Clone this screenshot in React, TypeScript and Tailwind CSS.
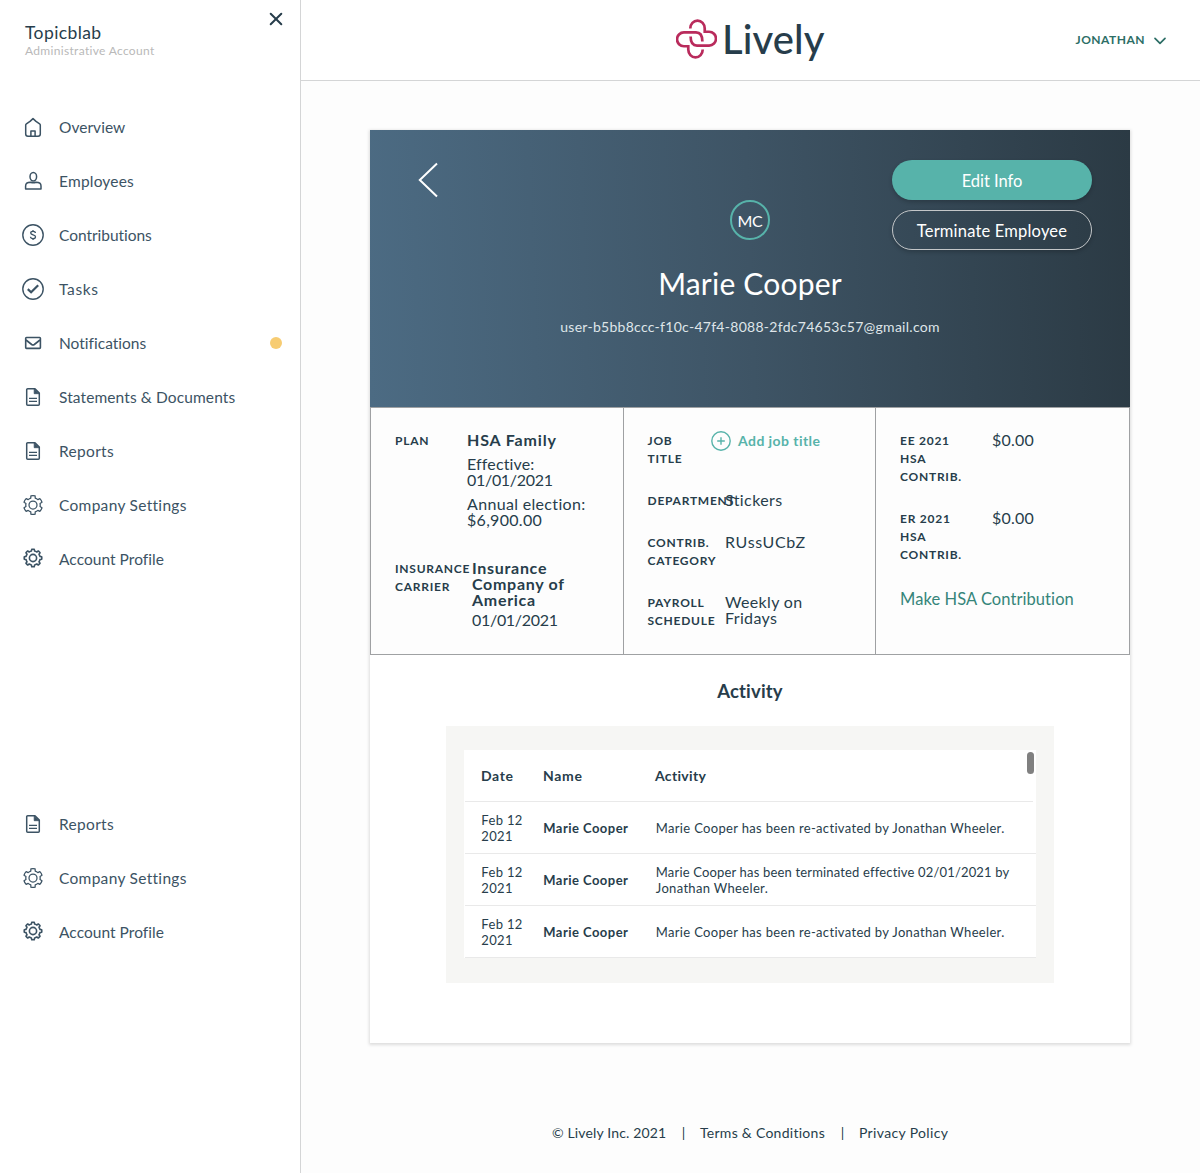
import React, { type ReactNode } from "react";

function HomeIcon() {
  return (
    <svg width="20" height="22" viewBox="0 0 20 22" fill="none" stroke="currentColor" strokeWidth="1.5" strokeLinejoin="round">
      <path d="M10 2.600 7 5.400 3.400 7.900a1.500 1.500 0 0 0-.7 1.300v8.800a2.200 2.200 0 0 0 2.200 2.200h10.200a2.200 2.200 0 0 0 2.200-2.200V9.200a1.500 1.500 0 0 0-.7-1.300L13 5.400Z" />
      <path d="M7.900 20v-5h4.200v5" />
    </svg>
  );
}

function PersonIcon() {
  return (
    <svg width="20" height="22" viewBox="0 0 20 22" fill="none" stroke="currentColor" strokeWidth="1.5" strokeLinejoin="round">
      <ellipse cx="10.3" cy="6.700" rx="3.300" ry="4.200" />
      <path d="M2.600 18.900v-3c0-2.500 2.200-3.600 5-3.600 1.700.7 3.700.7 5.400 0 2.800 0 5 1.100 5 3.600v3Z" />
    </svg>
  );
}

function DollarIcon() {
  return (
    <svg width="24" height="24" viewBox="0 0 24 24" fill="none" stroke="currentColor" strokeWidth="1.4">
      <circle cx="12" cy="12" r="10.200" />
      <path d="M14.400 10c-.1-1.100-1-1.700-2.400-1.700s-2.300.6-2.300 1.700c0 2.300 4.800 1.300 4.800 3.700 0 1.200-1 1.900-2.500 1.900s-2.400-.7-2.500-1.900M12 7v1.300M12 15.600V17" strokeWidth="1.300" />
    </svg>
  );
}

function CheckIcon() {
  return (
    <svg width="24" height="24" viewBox="0 0 24 24" fill="none" stroke="currentColor" strokeWidth="1.400">
      <circle cx="12" cy="12" r="10.200" />
      <path d="m6.800 12.100 3.300 3.100 7.100-7" strokeWidth="2.200" />
    </svg>
  );
}

function MailIcon() {
  return (
    <svg width="20" height="22" viewBox="0 0 20 22" fill="none" stroke="currentColor" strokeWidth="1.600" strokeLinejoin="round">
      <rect x="2.700" y="5.500" width="14.700" height="10.900" rx="0.8" />
      <path d="m3 8 5.700 4.500c.8.600 1.800.600 2.600 0L17 8" />
    </svg>
  );
}

function DocIcon() {
  return (
    <svg width="20" height="22" viewBox="0 0 20 22" fill="none" stroke="currentColor" strokeWidth="1.500" strokeLinejoin="round">
      <path d="M12 2.700H4.700a1 1 0 0 0-1 1v14.600a1 1 0 0 0 1 1h10.600a1 1 0 0 0 1-1V7Z" />
      <path d="M11.200 2.700v5h5Z" fill="currentColor" strokeWidth="0.800" />
      <path d="M6 12.300h8M6 15.300h8" strokeWidth="1.200" />
    </svg>
  );
}

// Closed outline of a gear centred on (12, 12); angles are in degrees.
function gearPath(teeth: number, outer: number, inner: number, tip: number, root: number) {
  const step = 360 / teeth;
  const at = (deg: number, r: number) => {
    const a = ((deg - 90) * Math.PI) / 180;
    return `${(12 + r * Math.cos(a)).toFixed(2)} ${(12 + r * Math.sin(a)).toFixed(2)}`;
  };
  let d = "";
  for (let i = 0; i < teeth; i++) {
    const c = i * step;
    d += `${i ? "L" : "M"}${at(c - root, inner)}L${at(c - tip, outer)}A${outer} ${outer} 0 0 1 ${at(c + tip, outer)}L${at(c + root, inner)}A${inner} ${inner} 0 0 1 ${at(c + step - root, inner)}`;
  }
  return d + "Z";
}

function Cog() {
  return (
    <svg width="24" height="24" viewBox="0 0 24 24" fill="none" stroke="currentColor" strokeWidth="1.250" strokeLinejoin="round">
      <path d={gearPath(6, 9.4, 7.2, 13, 18)} />
      <circle cx="12" cy="12" r="4" />
    </svg>
  );
}

function CogBold() {
  return (
    <svg width="24" height="24" viewBox="0 0 24 24" className="-mt-[3px]" fill="none" stroke="currentColor" strokeWidth="1.600" strokeLinejoin="round">
      <path d={gearPath(8, 8.8, 7.1, 8, 13)} />
      <circle cx="12" cy="12" r="3.600" />
    </svg>
  );
}

type NavEntry = { label: string; icon: ReactNode; tracking: string; dot?: boolean };

const mainNav: NavEntry[] = [
  { label: "Overview", icon: <HomeIcon />, tracking: "tracking-[0.03px]" },
  { label: "Employees", icon: <PersonIcon />, tracking: "tracking-[0.2px]" },
  { label: "Contributions", icon: <DollarIcon />, tracking: "tracking-[-0.03px]" },
  { label: "Tasks", icon: <CheckIcon />, tracking: "tracking-[0.65px]" },
  { label: "Notifications", icon: <MailIcon />, tracking: "tracking-[0.01px]", dot: true },
  { label: "Statements & Documents", icon: <DocIcon />, tracking: "tracking-[0.11px]" },
];

const secondaryNav: NavEntry[] = [
  { label: "Reports", icon: <DocIcon />, tracking: "tracking-[0.32px]" },
  { label: "Company Settings", icon: <Cog />, tracking: "tracking-[0.3px]" },
  { label: "Account Profile", icon: <CogBold />, tracking: "tracking-[0.04px]" },
];

function NavItem({ label, icon, tracking, dot }: NavEntry) {
  return (
    <a className="flex h-[54px] items-center text-[15.5px] text-[#3c5364]">
      <span className="flex w-[66px] shrink-0 items-center justify-center">{icon}</span>
      <span className={`-ml-[7px] whitespace-nowrap pt-[2px] ${tracking}`}>{label}</span>
      {dot && <span className="ml-auto mr-[18px] h-3 w-3 rounded-full bg-[#f7cc72]" />}
    </a>
  );
}

function Sidebar() {
  return (
    <aside className="flex w-[301px] shrink-0 flex-col border-r border-[#d4d5d6] bg-white">
      <div className="flex h-[100px] justify-between pl-[25px] pr-[17px]">
        <div className="pt-[22px]">
          <div className="text-[17.500px] leading-[22px] tracking-[0.4px]">Topicblab</div>
          <div className="text-[12px] leading-[14px] tracking-[0.32px] text-[#b9b9b9]">Administrative Account</div>
        </div>
        <svg width="14" height="14" viewBox="0 0 14 14" className="mt-[12px]" fill="none" stroke="currentColor" strokeWidth="2" strokeLinecap="round">
          <path d="m1.700 1.700 10.600 10.600M12.300 1.700 1.700 12.300" />
        </svg>
      </div>
      <nav>
        {[...mainNav, ...secondaryNav].map((n) => (
          <NavItem key={n.label} {...n} />
        ))}
      </nav>
      <nav className="mt-[211px]">
        {secondaryNav.map((n) => (
          <NavItem key={n.label} {...n} />
        ))}
      </nav>
    </aside>
  );
}

function Logo() {
  return (
    <div className="flex items-start">
      <svg width="41" height="40" viewBox="47.500 56 122 119" className="mt-[18.500px]" fill="none" stroke="#b92b5c" strokeWidth="8">
        <path d="M90 84A21.500 23 0 0 1 133 84V94H146A20.500 20.500 0 0 1 146 135H110C97 135 91 126 91 108" />
        <path d="M127 147A21.500 23 0 0 1 84 147V137H71A20.500 20.500 0 0 1 71 96H107C120 96 126 105 126 123" />
      </svg>
      <span className="ml-[5px] mt-[15px] text-[40px] font-medium leading-[48px] tracking-[0.1px]">Lively</span>
    </div>
  );
}

function Header() {
  return (
    <header className="flex h-[81px] shrink-0 border-b border-[#d4d5d6] bg-white">
      <div className="w-[375px]" />
      <Logo />
      <div className="ml-auto mr-[34px] flex items-center gap-[9px] text-[12px] font-bold text-[#2d6e66]">
        <span className="tracking-[0.480px]">JONATHAN</span>
        <svg width="12" height="8" viewBox="0 0 12 8" className="mt-[2px]" fill="none" stroke="currentColor" strokeWidth="1.700" strokeLinecap="round" strokeLinejoin="round">
          <path d="m1 1.300 5 5 5-5" />
        </svg>
      </div>
    </header>
  );
}

function ProfileBanner() {
  return (
    <div className="relative flex h-[277px] flex-col items-center bg-[linear-gradient(88deg,#4c6b83,#3e5465_50%,#2b3a44)] pt-[70px] text-white">
      <svg width="20" height="36" viewBox="0 0 20 36" className="absolute left-[48px] top-[32px]" fill="none" stroke="white" strokeWidth="2">
        <path d="M19 1.500 1.800 18 19 34.500" />
      </svg>
      <div className="absolute right-[38px] top-[30px] flex w-[200px] flex-col gap-[10px] text-[16.500px]">
        <button className="h-10 rounded-full bg-[#57b3aa] pt-[2px] tracking-[-0.050px] shadow-[0_2px_4px_rgba(0,0,0,0.2)]">Edit Info</button>
        <button className="h-10 rounded-full border border-[#c3c6c8] pt-[2px] tracking-[0.190px] shadow-[0_2px_4px_rgba(0,0,0,0.2)]">Terminate Employee</button>
      </div>
      <div className="flex h-10 w-10 items-center justify-center rounded-full border-2 border-[#57b3aa] pt-[2px] text-[16px] tracking-[-0.3px]">MC</div>
      <h1 className="mt-[23px] text-[30px] leading-[40px] tracking-[0.2px]">Marie Cooper</h1>
      <p className="mt-[14px] text-[14px] leading-[20px] tracking-[0.280px] text-[#dfe5e9]">
        user-b5bb8ccc-f10c-47f4-8088-2fdc74653c57@gmail.com
      </p>
    </div>
  );
}

function Field({ label, labelWidth, children }: { label: ReactNode; labelWidth: string; children: ReactNode }) {
  return (
    <div className="flex">
      <div className={`shrink-0 whitespace-nowrap text-[12px] font-bold leading-[18px] tracking-[0.750px] ${labelWidth}`}>{label}</div>
      <div className="whitespace-nowrap text-[16px] leading-[16px]">{children}</div>
    </div>
  );
}

function InfoGrid() {
  return (
    <div className="grid h-[248px] grid-cols-[253px_252px_255px] border border-[#9fa1a3] bg-[#fdfdfd]">
      <div className="border-r border-[#9fa1a3] p-6">
        <Field label="PLAN" labelWidth="w-[72px]">
          <div className="font-bold tracking-[0.850px]">HSA Family</div>
          <div className="mt-2"><span className="tracking-[0.15px]">Effective:</span><br /><span className="tracking-[-0.3px]">01/01/2021</span></div>
          <div className="mt-2"><span className="tracking-[0.330px]">Annual election:</span><br /><span className="tracking-[0.300px]">$6,900.00</span></div>
        </Field>
        <div className="h-8" />
        <Field label={<>INSURANCE<br />CARRIER</>} labelWidth="w-[77px]">
          <div className="font-bold tracking-[0.700px]">Insurance<br />Company of<br />America</div>
          <div className="mt-1 tracking-[-0.3px]">01/01/2021</div>
        </Field>
      </div>
      <div className="flex flex-col gap-6 border-r border-[#9fa1a3] py-6 pl-[23.500px] pr-6">
        <Field label={<>JOB<br />TITLE</>} labelWidth="w-[63.500px]">
          <div className="-mt-[1px] flex items-center text-[#57b3aa]">
            <svg width="20" height="20" viewBox="0 0 20 20" fill="none" stroke="currentColor" strokeWidth="1.400">
              <circle cx="10" cy="10" r="9.200" />
              <path d="M10 6.200v7.600M6.200 10h7.600" />
            </svg>
            <span className="ml-[7px] text-[14px] font-bold tracking-[0.430px]">Add job title</span>
          </div>
        </Field>
        <Field label="DEPARTMENT" labelWidth="w-[77.500px]"><span className="tracking-[0.400px]">Stickers</span></Field>
        <Field label={<>CONTRIB.<br />CATEGORY</>} labelWidth="w-[77.500px]"><span className="tracking-[0.65px]">RUssUCbZ</span></Field>
        <Field label={<>PAYROLL<br />SCHEDULE</>} labelWidth="w-[77.500px]"><span className="tracking-[0.350px]">Weekly on<br />Fridays</span></Field>
      </div>
      <div className="flex flex-col gap-6 p-6">
        <Field label={<>EE 2021<br />HSA<br />CONTRIB.</>} labelWidth="w-[92px]"><span className="tracking-[0.250px]">$0.00</span></Field>
        <Field label={<>ER 2021<br />HSA<br />CONTRIB.</>} labelWidth="w-[92px]"><span className="tracking-[0.250px]">$0.00</span></Field>
        <a className="pt-px text-[16.500px] leading-[20px] tracking-[0.070px] text-[#36857a]">Make HSA Contribution</a>
      </div>
    </div>
  );
}

const activity = [
  { tracking: "tracking-[0.330px]", text: <>Marie Cooper has been re-activated by Jonathan Wheeler.</> },
  { tracking: "tracking-[0.170px]", text: <>Marie Cooper has been terminated effective 02/01/2021 by<br /><span className="tracking-[0.33px]">Jonathan Wheeler.</span></> },
  { tracking: "tracking-[0.330px]", text: <>Marie Cooper has been re-activated by Jonathan Wheeler.</> },
];

function ActivityPanel() {
  return (
    <section>
      <h2 className="mt-[23px] text-center text-[18.500px] font-bold leading-[26px] tracking-[0.170px]">Activity</h2>
      <div className="mx-auto mt-[22px] h-[257px] w-[608px] bg-[#f6f6f4] px-[18px] pt-6">
        <div className="relative h-[208px] bg-white pl-px">
          <div className="mr-[3px] grid h-[52px] grid-cols-[62px_112px_1fr] items-center border-b border-[#e9e9e9] pl-4 text-[14px] font-bold tracking-[0.650px]">
            <span>Date</span>
            <span>Name</span>
            <span className="tracking-[0.330px]">Activity</span>
          </div>
          {activity.map((a, i) => (
            <div key={i} className="grid h-[52px] grid-cols-[62px_112.500px_1fr] items-center border-b border-[#e9e9e9] pl-[16.300px] text-[13px] leading-[16px]">
              <span className="tracking-[0.350px]">Feb 12<br />2021</span>
              <span className="font-bold tracking-[0.460px]">Marie Cooper</span>
              <span className={`whitespace-nowrap ${a.tracking}`}>{a.text}</span>
            </div>
          ))}
          <div className="absolute right-[2px] top-[2px] h-[22px] w-[7px] rounded-full bg-[#808080]" />
        </div>
      </div>
    </section>
  );
}

function Footer() {
  return (
    <footer className="mt-[80px] flex items-center pl-[251px] text-[14px] leading-[20px]">
      <span className="w-[115px] whitespace-nowrap tracking-[0.150px]">© Lively Inc. 2021</span>
      <span className="w-[33px] text-center">|</span>
      <a className="w-[126px] whitespace-nowrap tracking-[0.270px]">Terms &amp; Conditions</a>
      <span className="w-[33px] text-center">|</span>
      <a className="tracking-[0.350px]">Privacy Policy</a>
    </footer>
  );
}

export default function App() {
  return (
    <div className="flex h-[1173px] w-[1200px] overflow-hidden bg-[#fdfdfd] font-['Lato','Open_Sans',sans-serif] text-[#273d4b]">
      <Sidebar />
      <div className="flex min-w-0 flex-1 flex-col">
        <Header />
        <main className="ml-[69px] mt-[49px] h-[913px] w-[760px] shrink-0 bg-white shadow-[0_1px_3px_1px_rgba(0,0,0,0.130)]">
          <ProfileBanner />
          <InfoGrid />
          <ActivityPanel />
        </main>
        <Footer />
      </div>
    </div>
  );
}
